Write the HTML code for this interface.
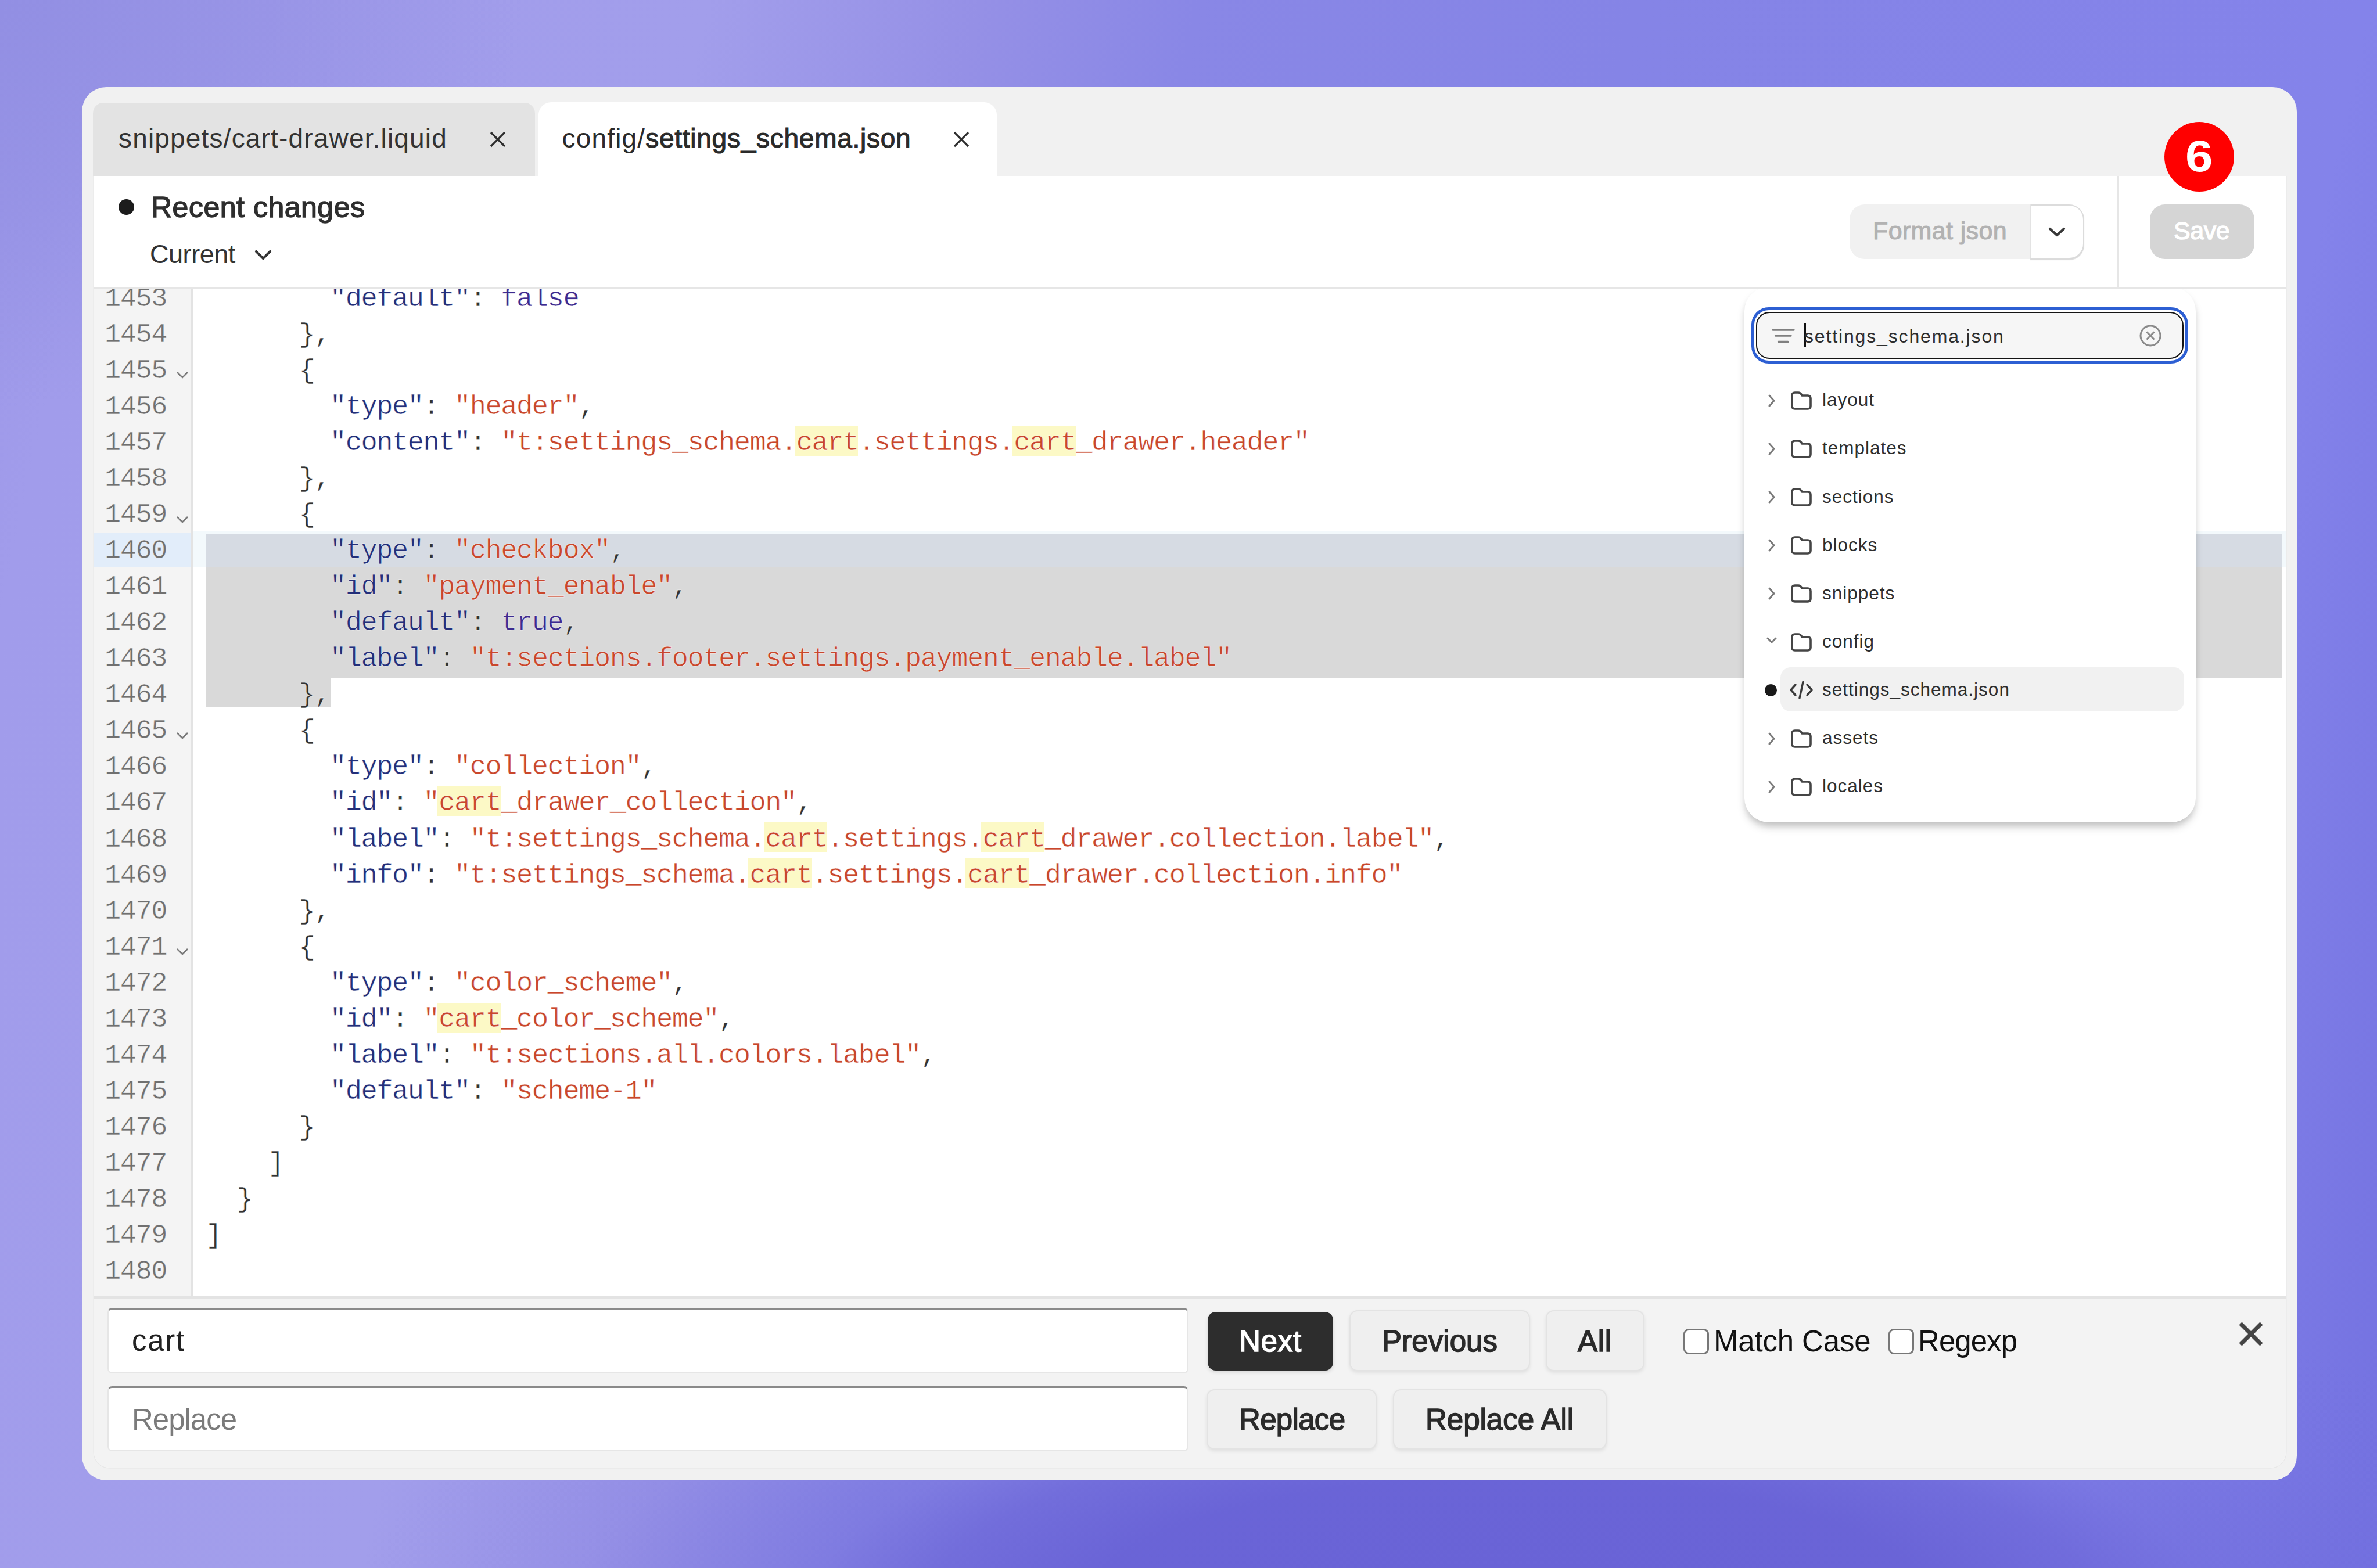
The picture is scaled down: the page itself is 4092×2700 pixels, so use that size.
<!DOCTYPE html>
<html><head><meta charset="utf-8"><title>Editor</title>
<style>
html,body{margin:0;padding:0;}
body{width:4092px;height:2700px;position:relative;overflow:hidden;font-family:"Liberation Sans",sans-serif;
background:
 radial-gradient(ellipse 2000px 600px at 2600px 2760px, rgba(105,99,214,1) 0%, rgba(105,99,214,0.97) 36%, rgba(105,99,214,0.7) 50%, rgba(105,99,214,0.33) 60%, rgba(105,99,214,0.05) 80%, rgba(105,99,214,0) 100%),
 radial-gradient(ellipse 900px 700px at 0px 0px, rgba(146,143,227,1) 0%, rgba(146,143,227,0.6) 50%, rgba(146,143,227,0) 100%),
 linear-gradient(102.5deg, #9c97e8 0%, #a19ceb 5%, #a29eeb 26%, #9590e6 36%, #8987e6 44%, #8584e6 60%, #8483ea 87%, #7371e0 100%);}
.abs{position:absolute;}
.t{position:absolute;white-space:pre;}
.ln{position:absolute;left:162px;width:125px;text-align:right;height:62px;line-height:62px;font-family:"Liberation Mono",monospace;font-size:47px;letter-spacing:-1.45px;color:#707070;-webkit-text-stroke:0.5px #f4f4f4;}
.cl{position:absolute;left:354px;height:62px;line-height:62px;white-space:pre;font-family:"Liberation Mono",monospace;font-size:47px;letter-spacing:-1.45px;color:#333;-webkit-text-stroke:0.5px #ffffff;}
.btn{position:absolute;box-sizing:border-box;border-radius:14px;background:#efefef;border:2px solid #e3e3e3;box-shadow:0 3px 6px rgba(0,0,0,0.08);}
.inp{position:absolute;box-sizing:border-box;background:#fff;border:2px solid #e6e6e6;border-top:3px solid #8a8a8a;border-radius:8px;}
.cb{position:absolute;box-sizing:border-box;width:44px;height:44px;border:3px solid #777;border-radius:9px;background:#fff;}
</style></head><body>
<!-- window -->
<div class="abs" style="left:141px;top:150px;width:3813px;height:2399px;border-radius:42px;background:#f1f1f1"></div>
<!-- tabs -->
<div class="abs" style="left:160px;top:177px;width:761px;height:126px;border-radius:18px 18px 0 0;background:#e3e3e3"></div>
<div class="abs" style="left:927px;top:176px;width:789px;height:127px;border-radius:22px 22px 0 0;background:#ffffff"></div>
<svg class="abs" style="left:842px;top:225px" width="30" height="30" viewBox="0 0 30 30"><path d="M3 3 L27 27 M27 3 L3 27" stroke="#2e2e2e" stroke-width="3.2"/></svg>
<svg class="abs" style="left:1640px;top:225px" width="30" height="30" viewBox="0 0 30 30"><path d="M3 3 L27 27 M27 3 L3 27" stroke="#2e2e2e" stroke-width="3.2"/></svg>
<!-- panel -->
<div class="abs" style="left:162px;top:303px;width:3773px;height:2224px;border-radius:0 0 26px 26px;background:#ffffff;box-shadow:-1.5px 0 0 #e8e8e8,1.5px 0 0 #e8e8e8,0 1.5px 0 #e6e6e6"></div>
<!-- header -->
<div class="abs" style="left:162px;top:494px;width:3773px;height:3px;background:#e6e6e6"></div>
<div class="abs" style="left:3644px;top:303px;width:3px;height:192px;background:#e6e6e6"></div>
<div class="abs" style="left:204px;top:343px;width:27px;height:27px;border-radius:50%;background:#1c1c1c"></div>
<svg class="abs" style="left:437px;top:428px" width="32" height="24" viewBox="0 0 32 24"><path d="M4 5 L16 17 L28 5" fill="none" stroke="#333" stroke-width="4.2" stroke-linecap="round" stroke-linejoin="round"/></svg>
<div class="abs" style="left:3184px;top:352px;width:404px;height:94px;border-radius:26px;background:#f1f1f1"></div>
<div class="abs" style="left:3495px;top:352px;width:93px;height:94px;box-sizing:border-box;border-radius:0 26px 26px 0;background:#ffffff;border:2px solid #dcdcdc;border-left:2px solid #e3e3e3;box-shadow:0 2px 1px rgba(0,0,0,0.14)"></div>
<svg class="abs" style="left:3524px;top:388px" width="34" height="26" viewBox="0 0 34 26"><path d="M5 6 L17 17 L29 6" fill="none" stroke="#383838" stroke-width="4.2" stroke-linecap="round" stroke-linejoin="round"/></svg>
<div class="abs" style="left:3701px;top:352px;width:180px;height:94px;border-radius:26px;background:#d5d5d5"></div>
<div class="abs" style="left:3726px;top:210px;width:120px;height:120px;border-radius:50%;background:#ff0000"></div>
<!-- editor -->
<div class="abs" style="left:162px;top:497px;width:167px;height:1736px;background:#f4f4f4"></div>
<div class="abs" style="left:329px;top:497px;width:4px;height:1736px;background:#e3e3e3"></div>
<div class="abs" style="left:162px;top:497px;width:3773px;height:1736px;overflow:hidden">
<div class="abs" style="left:-162px;top:-497px;width:4092px;height:2700px">
<div class="abs" style="left:162px;top:917px;width:167px;height:59px;background:#e2edfa"></div>
<div class="abs" style="left:333px;top:914px;width:3602px;height:62px;background:#f3f9fc"></div>
<div class="abs" style="left:354px;top:920px;width:3574px;height:56px;background:#d6dbe3"></div>
<div class="abs" style="left:354px;top:976px;width:3574px;height:191px;background:#d9d9d9"></div>
<div class="abs" style="left:354px;top:1167px;width:215px;height:51px;background:#d9d9d9"></div>
<div class="abs" style="left:1368.0px;top:733.8px;width:109.0px;height:51px;background:#fcf9c6"></div>
<div class="abs" style="left:1742.5px;top:733.8px;width:109.0px;height:51px;background:#fcf9c6"></div>
<div class="abs" style="left:752.8px;top:1354.2px;width:109.0px;height:51px;background:#fcf9c6"></div>
<div class="abs" style="left:1314.5px;top:1416.3px;width:109.0px;height:51px;background:#fcf9c6"></div>
<div class="abs" style="left:1689.0px;top:1416.3px;width:109.0px;height:51px;background:#fcf9c6"></div>
<div class="abs" style="left:1287.8px;top:1478.3px;width:109.0px;height:51px;background:#fcf9c6"></div>
<div class="abs" style="left:1662.2px;top:1478.3px;width:109.0px;height:51px;background:#fcf9c6"></div>
<div class="abs" style="left:752.8px;top:1726.5px;width:109.0px;height:51px;background:#fcf9c6"></div>
<div class="ln" style="top:483.9px">1453</div>
<div class="cl" style="top:483.9px">        <span style="color:#232f7a">&quot;default&quot;</span><span style="color:#333333">: </span><span style="color:#3d2b8f">false</span></div>
<div class="ln" style="top:545.9px">1454</div>
<div class="cl" style="top:545.9px">      <span style="color:#333333">},</span></div>
<div class="ln" style="top:607.9px">1455</div>
<div class="cl" style="top:607.9px">      <span style="color:#333333">{</span></div>
<div class="ln" style="top:670.0px">1456</div>
<div class="cl" style="top:670.0px">        <span style="color:#232f7a">&quot;type&quot;</span><span style="color:#333333">: </span><span style="color:#c9472c">&quot;header&quot;</span><span style="color:#333333">,</span></div>
<div class="ln" style="top:732.0px">1457</div>
<div class="cl" style="top:732.0px">        <span style="color:#232f7a">&quot;content&quot;</span><span style="color:#333333">: </span><span style="color:#c9472c">&quot;t:settings_schema.cart.settings.cart_drawer.header&quot;</span></div>
<div class="ln" style="top:794.1px">1458</div>
<div class="cl" style="top:794.1px">      <span style="color:#333333">},</span></div>
<div class="ln" style="top:856.1px">1459</div>
<div class="cl" style="top:856.1px">      <span style="color:#333333">{</span></div>
<div class="ln" style="top:918.1px">1460</div>
<div class="cl" style="top:918.1px">        <span style="color:#232f7a">&quot;type&quot;</span><span style="color:#333333">: </span><span style="color:#c9472c">&quot;checkbox&quot;</span><span style="color:#333333">,</span></div>
<div class="ln" style="top:980.2px">1461</div>
<div class="cl" style="top:980.2px">        <span style="color:#232f7a">&quot;id&quot;</span><span style="color:#333333">: </span><span style="color:#c9472c">&quot;payment_enable&quot;</span><span style="color:#333333">,</span></div>
<div class="ln" style="top:1042.2px">1462</div>
<div class="cl" style="top:1042.2px">        <span style="color:#232f7a">&quot;default&quot;</span><span style="color:#333333">: </span><span style="color:#3d2b8f">true</span><span style="color:#333333">,</span></div>
<div class="ln" style="top:1104.3px">1463</div>
<div class="cl" style="top:1104.3px">        <span style="color:#232f7a">&quot;label&quot;</span><span style="color:#333333">: </span><span style="color:#c9472c">&quot;t:sections.footer.settings.payment_enable.label&quot;</span></div>
<div class="ln" style="top:1166.3px">1464</div>
<div class="cl" style="top:1166.3px">      <span style="color:#333333">},</span></div>
<div class="ln" style="top:1228.3px">1465</div>
<div class="cl" style="top:1228.3px">      <span style="color:#333333">{</span></div>
<div class="ln" style="top:1290.4px">1466</div>
<div class="cl" style="top:1290.4px">        <span style="color:#232f7a">&quot;type&quot;</span><span style="color:#333333">: </span><span style="color:#c9472c">&quot;collection&quot;</span><span style="color:#333333">,</span></div>
<div class="ln" style="top:1352.4px">1467</div>
<div class="cl" style="top:1352.4px">        <span style="color:#232f7a">&quot;id&quot;</span><span style="color:#333333">: </span><span style="color:#c9472c">&quot;cart_drawer_collection&quot;</span><span style="color:#333333">,</span></div>
<div class="ln" style="top:1414.5px">1468</div>
<div class="cl" style="top:1414.5px">        <span style="color:#232f7a">&quot;label&quot;</span><span style="color:#333333">: </span><span style="color:#c9472c">&quot;t:settings_schema.cart.settings.cart_drawer.collection.label&quot;</span><span style="color:#333333">,</span></div>
<div class="ln" style="top:1476.5px">1469</div>
<div class="cl" style="top:1476.5px">        <span style="color:#232f7a">&quot;info&quot;</span><span style="color:#333333">: </span><span style="color:#c9472c">&quot;t:settings_schema.cart.settings.cart_drawer.collection.info&quot;</span></div>
<div class="ln" style="top:1538.5px">1470</div>
<div class="cl" style="top:1538.5px">      <span style="color:#333333">},</span></div>
<div class="ln" style="top:1600.6px">1471</div>
<div class="cl" style="top:1600.6px">      <span style="color:#333333">{</span></div>
<div class="ln" style="top:1662.6px">1472</div>
<div class="cl" style="top:1662.6px">        <span style="color:#232f7a">&quot;type&quot;</span><span style="color:#333333">: </span><span style="color:#c9472c">&quot;color_scheme&quot;</span><span style="color:#333333">,</span></div>
<div class="ln" style="top:1724.7px">1473</div>
<div class="cl" style="top:1724.7px">        <span style="color:#232f7a">&quot;id&quot;</span><span style="color:#333333">: </span><span style="color:#c9472c">&quot;cart_color_scheme&quot;</span><span style="color:#333333">,</span></div>
<div class="ln" style="top:1786.7px">1474</div>
<div class="cl" style="top:1786.7px">        <span style="color:#232f7a">&quot;label&quot;</span><span style="color:#333333">: </span><span style="color:#c9472c">&quot;t:sections.all.colors.label&quot;</span><span style="color:#333333">,</span></div>
<div class="ln" style="top:1848.7px">1475</div>
<div class="cl" style="top:1848.7px">        <span style="color:#232f7a">&quot;default&quot;</span><span style="color:#333333">: </span><span style="color:#c9472c">&quot;scheme-1&quot;</span></div>
<div class="ln" style="top:1910.8px">1476</div>
<div class="cl" style="top:1910.8px">      <span style="color:#333333">}</span></div>
<div class="ln" style="top:1972.8px">1477</div>
<div class="cl" style="top:1972.8px">    <span style="color:#333333">]</span></div>
<div class="ln" style="top:2034.9px">1478</div>
<div class="cl" style="top:2034.9px">  <span style="color:#333333">}</span></div>
<div class="ln" style="top:2096.9px">1479</div>
<div class="cl" style="top:2096.9px"><span style="color:#333333">]</span></div>
<div class="ln" style="top:2158.9px">1480</div>
<div class="cl" style="top:2158.9px"></div>
<svg class="abs" style="left:302px;top:637.4px" width="24" height="18" viewBox="0 0 24 18"><path d="M3 4 L12 13 L21 4" fill="none" stroke="#7a7a7a" stroke-width="2.6"/></svg>
<svg class="abs" style="left:302px;top:885.6px" width="24" height="18" viewBox="0 0 24 18"><path d="M3 4 L12 13 L21 4" fill="none" stroke="#7a7a7a" stroke-width="2.6"/></svg>
<svg class="abs" style="left:302px;top:1257.8px" width="24" height="18" viewBox="0 0 24 18"><path d="M3 4 L12 13 L21 4" fill="none" stroke="#7a7a7a" stroke-width="2.6"/></svg>
<svg class="abs" style="left:302px;top:1630.1px" width="24" height="18" viewBox="0 0 24 18"><path d="M3 4 L12 13 L21 4" fill="none" stroke="#7a7a7a" stroke-width="2.6"/></svg>
</div></div>
<div class="abs" style="left:162px;top:2232px;width:3773px;height:4px;background:#e3e3e3"></div>
<!-- find panel -->
<div class="abs" style="left:162px;top:2236px;width:3773px;height:291px;border-radius:0 0 26px 26px;background:#f3f3f3"></div>
<div class="inp" style="left:185px;top:2252px;width:1861px;height:113px"></div>
<div class="inp" style="left:185px;top:2387px;width:1861px;height:112px"></div>
<div class="abs" style="left:2079px;top:2259px;width:216px;height:101px;border-radius:14px;background:#2d2d2d;box-shadow:0 3px 6px rgba(0,0,0,0.12)"></div>
<div class="btn" style="left:2323px;top:2256px;width:311px;height:105px"></div>
<div class="btn" style="left:2661px;top:2256px;width:170px;height:105px"></div>
<div class="btn" style="left:2077px;top:2392px;width:293px;height:104px"></div>
<div class="btn" style="left:2398px;top:2392px;width:368px;height:104px"></div>
<div class="cb" style="left:2898px;top:2288px"></div>
<div class="cb" style="left:3251px;top:2288px"></div>
<svg class="abs" style="left:3853px;top:2275px" width="44" height="44" viewBox="0 0 44 44"><path d="M4 4 L40 40 M40 4 L4 40" stroke="#444" stroke-width="7"/></svg>
<!-- popup -->
<div class="abs" style="left:0;top:497px;width:4092px;height:1736px;overflow:hidden"><div class="abs" style="left:0;top:-497px;width:4092px;height:2700px">
<div class="abs" style="left:3003px;top:494px;width:777px;height:922px;border-radius:42px;background:#ffffff;box-shadow:0 10px 16px -3px rgba(0,0,0,0.22),0 6px 10px rgba(0,0,0,0.06)"></div>
<div class="abs" style="left:3015px;top:529px;width:752px;height:97px;box-sizing:border-box;border-radius:30px;border:5.5px solid #2d5fd3;background:#fff"></div>
<div class="abs" style="left:3023px;top:537px;width:736px;height:81px;box-sizing:border-box;border-radius:23px;border:2.6px solid #141414;background:#f6f6f6"></div>
<svg class="abs" style="left:3050px;top:563px" width="40" height="30" viewBox="0 0 40 30"><path d="M2 5 L38 5 M6.5 15 L33 15 M11.5 25.5 L28 25.5" stroke="#808080" stroke-width="3.3" stroke-linecap="round"/></svg>
<div class="abs" style="left:3106px;top:557px;width:3px;height:41px;background:#111"></div>
<svg class="abs" style="left:3682px;top:558px" width="40" height="40" viewBox="0 0 40 40"><circle cx="20" cy="20" r="17" fill="none" stroke="#8a8a8a" stroke-width="3"/><path d="M13.5 13.5 L26.5 26.5 M26.5 13.5 L13.5 26.5" stroke="#8a8a8a" stroke-width="3"/></svg>
<svg class="abs" style="left:3042px;top:678.0px" width="16" height="24" viewBox="0 0 16 24"><path d="M4 3 L12 12 L4 21" fill="none" stroke="#7a7a7a" stroke-width="3" stroke-linecap="round" stroke-linejoin="round"/></svg>
<svg class="abs" style="left:3082px;top:673.0px" width="38" height="34" viewBox="0 0 38 34"><path d="M3 8 Q3 3 8 3 L14 3 Q17 3 19 6 L20 8 L30 8 Q35 8 35 13 L35 26 Q35 31 30 31 L8 31 Q3 31 3 26 Z" fill="none" stroke="#454545" stroke-width="3.6" stroke-linejoin="round"/></svg>
<div class="t" style="left:3137.0px;top:673.3px;font-size:31.5px;line-height:31.5px;color:#2e2e2e;font-weight:normal;letter-spacing:1.0px;">layout</div>
<svg class="abs" style="left:3042px;top:761.1px" width="16" height="24" viewBox="0 0 16 24"><path d="M4 3 L12 12 L4 21" fill="none" stroke="#7a7a7a" stroke-width="3" stroke-linecap="round" stroke-linejoin="round"/></svg>
<svg class="abs" style="left:3082px;top:756.1px" width="38" height="34" viewBox="0 0 38 34"><path d="M3 8 Q3 3 8 3 L14 3 Q17 3 19 6 L20 8 L30 8 Q35 8 35 13 L35 26 Q35 31 30 31 L8 31 Q3 31 3 26 Z" fill="none" stroke="#454545" stroke-width="3.6" stroke-linejoin="round"/></svg>
<div class="t" style="left:3137.0px;top:756.4px;font-size:31.5px;line-height:31.5px;color:#2e2e2e;font-weight:normal;letter-spacing:1.0px;">templates</div>
<svg class="abs" style="left:3042px;top:844.2px" width="16" height="24" viewBox="0 0 16 24"><path d="M4 3 L12 12 L4 21" fill="none" stroke="#7a7a7a" stroke-width="3" stroke-linecap="round" stroke-linejoin="round"/></svg>
<svg class="abs" style="left:3082px;top:839.2px" width="38" height="34" viewBox="0 0 38 34"><path d="M3 8 Q3 3 8 3 L14 3 Q17 3 19 6 L20 8 L30 8 Q35 8 35 13 L35 26 Q35 31 30 31 L8 31 Q3 31 3 26 Z" fill="none" stroke="#454545" stroke-width="3.6" stroke-linejoin="round"/></svg>
<div class="t" style="left:3137.0px;top:839.5px;font-size:31.5px;line-height:31.5px;color:#2e2e2e;font-weight:normal;letter-spacing:1.0px;">sections</div>
<svg class="abs" style="left:3042px;top:927.3px" width="16" height="24" viewBox="0 0 16 24"><path d="M4 3 L12 12 L4 21" fill="none" stroke="#7a7a7a" stroke-width="3" stroke-linecap="round" stroke-linejoin="round"/></svg>
<svg class="abs" style="left:3082px;top:922.3px" width="38" height="34" viewBox="0 0 38 34"><path d="M3 8 Q3 3 8 3 L14 3 Q17 3 19 6 L20 8 L30 8 Q35 8 35 13 L35 26 Q35 31 30 31 L8 31 Q3 31 3 26 Z" fill="none" stroke="#454545" stroke-width="3.6" stroke-linejoin="round"/></svg>
<div class="t" style="left:3137.0px;top:922.6px;font-size:31.5px;line-height:31.5px;color:#2e2e2e;font-weight:normal;letter-spacing:1.0px;">blocks</div>
<svg class="abs" style="left:3042px;top:1010.4px" width="16" height="24" viewBox="0 0 16 24"><path d="M4 3 L12 12 L4 21" fill="none" stroke="#7a7a7a" stroke-width="3" stroke-linecap="round" stroke-linejoin="round"/></svg>
<svg class="abs" style="left:3082px;top:1005.4px" width="38" height="34" viewBox="0 0 38 34"><path d="M3 8 Q3 3 8 3 L14 3 Q17 3 19 6 L20 8 L30 8 Q35 8 35 13 L35 26 Q35 31 30 31 L8 31 Q3 31 3 26 Z" fill="none" stroke="#454545" stroke-width="3.6" stroke-linejoin="round"/></svg>
<div class="t" style="left:3137.0px;top:1005.7px;font-size:31.5px;line-height:31.5px;color:#2e2e2e;font-weight:normal;letter-spacing:1.0px;">snippets</div>
<svg class="abs" style="left:3040px;top:1094.5px" width="20" height="16" viewBox="0 0 20 16"><path d="M3 4 L10 11 L17 4" fill="none" stroke="#7a7a7a" stroke-width="3" stroke-linecap="round" stroke-linejoin="round"/></svg>
<svg class="abs" style="left:3082px;top:1088.5px" width="38" height="34" viewBox="0 0 38 34"><path d="M3 8 Q3 3 8 3 L14 3 Q17 3 19 6 L20 8 L30 8 Q35 8 35 13 L35 26 Q35 31 30 31 L8 31 Q3 31 3 26 Z" fill="none" stroke="#454545" stroke-width="3.6" stroke-linejoin="round"/></svg>
<div class="t" style="left:3137.0px;top:1088.8px;font-size:31.5px;line-height:31.5px;color:#2e2e2e;font-weight:normal;letter-spacing:1.0px;">config</div>
<div class="abs" style="left:3065px;top:1149px;width:695px;height:76px;border-radius:18px;background:#f1f1f1"></div>
<div class="abs" style="left:3038px;top:1178.1px;width:21px;height:21px;border-radius:50%;background:#1a1a1a"></div>
<svg class="abs" style="left:3080px;top:1169.6px" width="42" height="36" viewBox="0 0 42 36"><path d="M11 9 L3 18 L11 27 M31 9 L39 18 L31 27 M24 4 L18 32" fill="none" stroke="#3a3a3a" stroke-width="3.4" stroke-linecap="round" stroke-linejoin="round"/></svg>
<div class="t" style="left:3137.0px;top:1171.9px;font-size:31.5px;line-height:31.5px;color:#2e2e2e;font-weight:normal;letter-spacing:1.0px;">settings_schema.json</div>
<svg class="abs" style="left:3042px;top:1259.7px" width="16" height="24" viewBox="0 0 16 24"><path d="M4 3 L12 12 L4 21" fill="none" stroke="#7a7a7a" stroke-width="3" stroke-linecap="round" stroke-linejoin="round"/></svg>
<svg class="abs" style="left:3082px;top:1254.7px" width="38" height="34" viewBox="0 0 38 34"><path d="M3 8 Q3 3 8 3 L14 3 Q17 3 19 6 L20 8 L30 8 Q35 8 35 13 L35 26 Q35 31 30 31 L8 31 Q3 31 3 26 Z" fill="none" stroke="#454545" stroke-width="3.6" stroke-linejoin="round"/></svg>
<div class="t" style="left:3137.0px;top:1255.0px;font-size:31.5px;line-height:31.5px;color:#2e2e2e;font-weight:normal;letter-spacing:1.0px;">assets</div>
<svg class="abs" style="left:3042px;top:1342.8px" width="16" height="24" viewBox="0 0 16 24"><path d="M4 3 L12 12 L4 21" fill="none" stroke="#7a7a7a" stroke-width="3" stroke-linecap="round" stroke-linejoin="round"/></svg>
<svg class="abs" style="left:3082px;top:1337.8px" width="38" height="34" viewBox="0 0 38 34"><path d="M3 8 Q3 3 8 3 L14 3 Q17 3 19 6 L20 8 L30 8 Q35 8 35 13 L35 26 Q35 31 30 31 L8 31 Q3 31 3 26 Z" fill="none" stroke="#454545" stroke-width="3.6" stroke-linejoin="round"/></svg>
<div class="t" style="left:3137.0px;top:1338.1px;font-size:31.5px;line-height:31.5px;color:#2e2e2e;font-weight:normal;letter-spacing:1.0px;">locales</div>
<div class="t" style="left:3106.0px;top:563.3px;font-size:32px;line-height:32px;color:#2e2e2e;font-weight:normal;letter-spacing:1.85px;">settings_schema.json</div>
</div></div>
<div class="t" style="left:204.0px;top:215.1px;font-size:46px;line-height:46px;color:#333;font-weight:normal;letter-spacing:1.17px;">snippets/cart-drawer.liquid</div>
<div class="t" style="left:967.5px;top:215.1px;font-size:46px;line-height:46px;color:#2a2a2a;font-weight:normal;letter-spacing:1.17px;">config/<span style="letter-spacing:0.74px;-webkit-text-stroke:1.1px #2a2a2a">settings_schema.json</span></div>
<div class="t" style="left:260.0px;top:331.5px;font-size:50px;line-height:50px;color:#2e2e2e;font-weight:normal;letter-spacing:0.51px;-webkit-text-stroke:1.4px #2e2e2e">Recent changes</div>
<div class="t" style="left:258.0px;top:414.5px;font-size:45px;line-height:45px;color:#333;font-weight:normal;letter-spacing:-0.46px;">Current</div>
<div class="t" style="left:3224.0px;top:376.0px;font-size:43px;line-height:43px;color:#b2b2b2;font-weight:normal;letter-spacing:0.36px;-webkit-text-stroke:1.1px #b2b2b2">Format json</div>
<div class="t" style="left:3742.0px;top:375.6px;font-size:43px;line-height:43px;color:#ffffff;font-weight:normal;letter-spacing:-0.48px;-webkit-text-stroke:1.3px #ffffff">Save</div>
<div class="t" style="left:3762.0px;top:230.7px;font-size:76px;line-height:76px;color:#ffffff;font-weight:bold;letter-spacing:0px;transform:scaleX(1.12);transform-origin:0 0">6</div>
<div class="t" style="left:227.0px;top:2283.3px;font-size:51px;line-height:51px;color:#222;font-weight:normal;letter-spacing:1.68px;">cart</div>
<div class="t" style="left:227.0px;top:2418.8px;font-size:51px;line-height:51px;color:#7b7b7b;font-weight:normal;letter-spacing:-1.01px;">Replace</div>
<div class="t" style="left:2133.0px;top:2284.1px;font-size:51px;line-height:51px;color:#ffffff;font-weight:normal;letter-spacing:0.73px;-webkit-text-stroke:1.5px #ffffff">Next</div>
<div class="t" style="left:2379.0px;top:2284.1px;font-size:51px;line-height:51px;color:#2a2a2a;font-weight:normal;letter-spacing:0.09px;-webkit-text-stroke:1.5px #2a2a2a">Previous</div>
<div class="t" style="left:2716.0px;top:2284.1px;font-size:51px;line-height:51px;color:#2a2a2a;font-weight:normal;letter-spacing:0.69px;-webkit-text-stroke:1.5px #2a2a2a">All</div>
<div class="t" style="left:2133.0px;top:2418.8px;font-size:51px;line-height:51px;color:#2a2a2a;font-weight:normal;letter-spacing:-0.68px;-webkit-text-stroke:1.5px #2a2a2a">Replace</div>
<div class="t" style="left:2454.0px;top:2418.8px;font-size:51px;line-height:51px;color:#2a2a2a;font-weight:normal;letter-spacing:-0.01px;-webkit-text-stroke:1.5px #2a2a2a">Replace All</div>
<div class="t" style="left:2950.0px;top:2284.2px;font-size:51px;line-height:51px;color:#111;font-weight:normal;letter-spacing:-0.17px;">Match Case</div>
<div class="t" style="left:3302.0px;top:2284.2px;font-size:51px;line-height:51px;color:#111;font-weight:normal;letter-spacing:-0.95px;">Regexp</div>
</body></html>
